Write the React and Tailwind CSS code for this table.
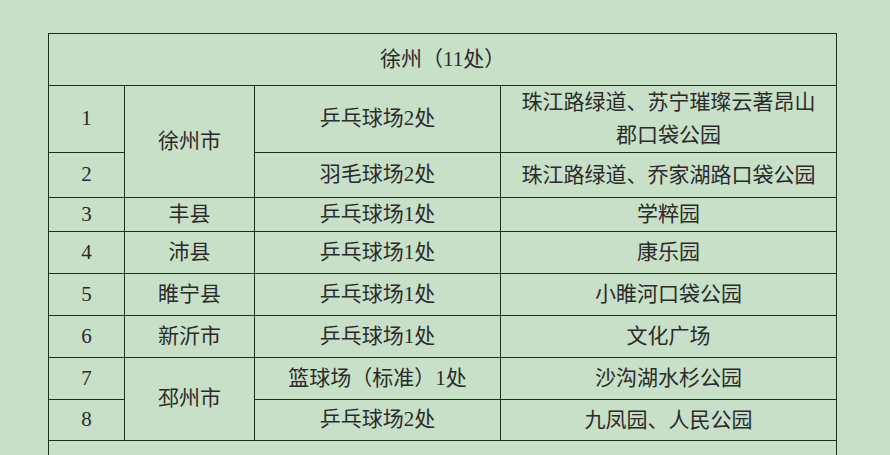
const rows = [
  { n: '1', city: '徐州市', span: 2, item: '乒乓球场2处', place: '珠江路绿道、苏宁璀璨云著昂山郡口袋公园', h: 'h-[67px]' },
  { n: '2', item: '羽毛球场2处', place: '珠江路绿道、乔家湖路口袋公园', h: 'h-[45px]' },
  { n: '3', city: '丰县', span: 1, item: '乒乓球场1处', place: '学粹园', h: 'h-[33px]' },
  { n: '4', city: '沛县', span: 1, item: '乒乓球场1处', place: '康乐园', h: 'h-[42px]' },
  { n: '5', city: '睢宁县', span: 1, item: '乒乓球场1处', place: '小睢河口袋公园', h: 'h-[42px]' },
  { n: '6', city: '新沂市', span: 1, item: '乒乓球场1处', place: '文化广场', h: 'h-[42px]' },
  { n: '7', city: '邳州市', span: 2, item: '篮球场（标准）1处', place: '沙沟湖水杉公园', h: 'h-[42px]' },
  { n: '8', item: '乒乓球场2处', place: '九凤园、人民公园', h: 'h-[41px]' },
]

const cell = 'border border-[#1f2c20] text-center align-middle p-0'

export default function App() {
  return (
    <div
      className="w-[890px] h-[455px] overflow-hidden bg-[#c8dfc8] pt-[33px] pl-[48px] text-[21px] text-[#2b2b2b]"
      style={{ fontFamily: '"Liberation Serif", "Noto Sans CJK SC", sans-serif' }}
    >
      <table className="table-fixed border-collapse w-[788px]">
        <colgroup>
          <col className="w-[76px]" />
          <col className="w-[130px]" />
          <col className="w-[246px]" />
          <col className="w-[336px]" />
        </colgroup>
        <tbody>
          <tr className="h-[52px]">
            <td colSpan={4} className={cell}>徐州（11处）</td>
          </tr>
          {rows.map((r) => (
            <tr key={r.n} className={r.h}>
              <td className={cell}>{r.n}</td>
              {r.city && (
                <td rowSpan={r.span} className={cell}>{r.city}</td>
              )}
              <td className={cell}>{r.item}</td>
              <td className={`${cell} px-[14px] leading-[33px]`}>{r.place}</td>
            </tr>
          ))}
          <tr className="h-[52px]">
            <td colSpan={4} className={`${cell} align-top pt-[12px]`}>连云港（8处）</td>
          </tr>
        </tbody>
      </table>
    </div>
  )
}
